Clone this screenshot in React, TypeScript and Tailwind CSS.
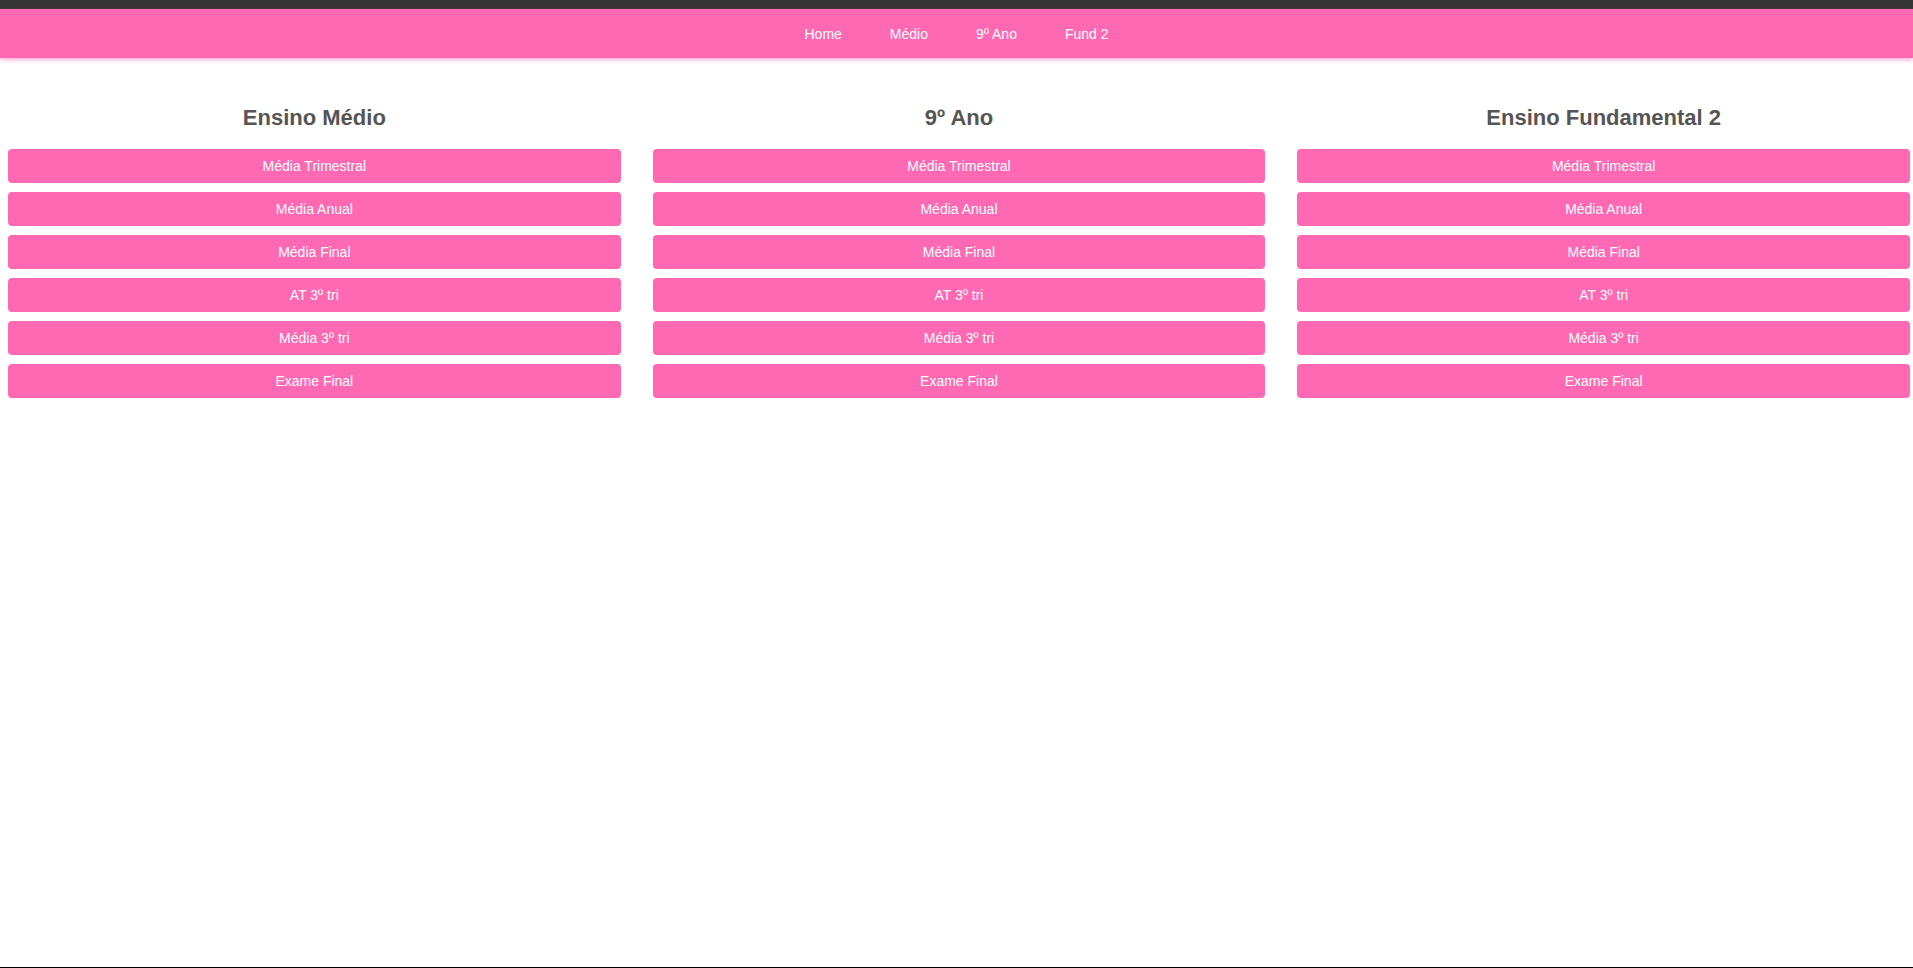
const navLinks = ["Home", "Médio", "9º Ano", "Fund 2"];

const items = [
  "Média Trimestral",
  "Média Anual",
  "Média Final",
  "AT 3º tri",
  "Média 3º tri",
  "Exame Final",
];

const sections = ["Ensino Médio", "9º Ano", "Ensino Fundamental 2"];

function Section({ title }: { title: string }) {
  return (
    <div className="flex flex-col">
      <h2 className="mb-[17px] text-center text-[22px] font-bold leading-[28px] text-[#555]">
        {title}
      </h2>
      {items.map((item) => (
        <button
          key={item}
          className="mb-[9px] flex h-[34px] w-full items-center justify-center rounded-[4px] bg-[#ff69b4] text-[14px] text-white"
        >
          {item}
        </button>
      ))}
    </div>
  );
}

export default function App() {
  return (
    <div
      className="flex h-screen flex-col border-b border-black bg-white"
      style={{ fontFamily: '"Liberation Sans", Arial, sans-serif' }}
    >
      <div className="h-[9px] bg-[#353535]" />
      <nav className="flex h-[49px] items-center justify-center bg-[#ff69b4] pt-[2px] shadow-[0_2px_4px_rgba(255,105,180,0.55)]">
        {navLinks.map((link) => (
          <a key={link} href="#" className="px-[24px] text-[14px] text-white">
            {link}
          </a>
        ))}
      </nav>
      <main className="mt-[46px] grid grid-cols-3 gap-8 pl-2 pr-[3px]">
        {sections.map((s) => (
          <Section key={s} title={s} />
        ))}
      </main>
    </div>
  );
}
